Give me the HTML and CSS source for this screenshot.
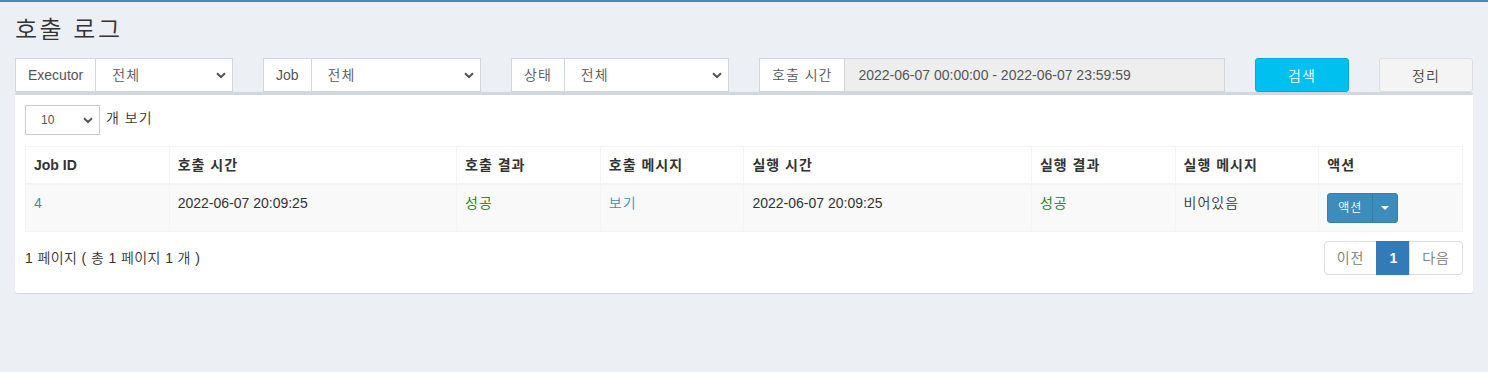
FILE: index.html
```html
<!DOCTYPE html>
<html lang="ko">
<head>
<meta charset="utf-8">
<title>호출 로그</title>
<link rel="stylesheet" href="styles.css">
</head>
<body>
<div class="topbar"></div>
<section class="content-header">
  <h1>호출 로그</h1>
</section>
<section class="content">
  <div class="filters">
    <div class="ig span2">
      <span class="addon">Executor</span>
      <div class="sel"><span class="ko">전체</span><svg class="chev" width="10" height="7" viewBox="0 0 10 7"><path d="M1 1.2 L5 5 L9 1.2" fill="none" stroke="#555" stroke-width="2"/></svg></div>
    </div>
    <div class="ig span2">
      <span class="addon">Job</span>
      <div class="sel"><span class="ko">전체</span><svg class="chev" width="10" height="7" viewBox="0 0 10 7"><path d="M1 1.2 L5 5 L9 1.2" fill="none" stroke="#555" stroke-width="2"/></svg></div>
    </div>
    <div class="ig span2">
      <span class="addon ko">상태</span>
      <div class="sel"><span class="ko">전체</span><svg class="chev" width="10" height="7" viewBox="0 0 10 7"><path d="M1 1.2 L5 5 L9 1.2" fill="none" stroke="#555" stroke-width="2"/></svg></div>
    </div>
    <div class="ig span4">
      <span class="addon ko">호출 시간</span>
      <div class="inp">2022-06-07 00:00:00 - 2022-06-07 23:59:59</div>
    </div>
    <button class="btn btn-info ko">검색</button>
    <button class="btn btn-default ko">정리</button>
  </div>

  <div class="box">
    <div class="box-body">
      <div class="length">
        <div class="sel sm"><span>10</span><svg class="chev" width="10" height="7" viewBox="0 0 10 7"><path d="M1 1.2 L5 5 L9 1.2" fill="none" stroke="#555" stroke-width="2"/></svg></div>
        <span class="len-label ko">개 보기</span>
      </div>
      <table class="tbl">
        <colgroup>
          <col class="w10"><col class="w20"><col class="w10"><col class="w10"><col class="w20"><col class="w10"><col class="w10"><col class="w10">
        </colgroup>
        <thead>
          <tr><th>Job ID</th><th class="ko">호출 시간</th><th class="ko">호출 결과</th><th class="ko">호출 메시지</th><th class="ko">실행 시간</th><th class="ko">실행 결과</th><th class="ko">실행 메시지</th><th class="ko">액션</th></tr>
        </thead>
        <tbody>
          <tr>
            <td><a class="lnk">4</a></td>
            <td>2022-06-07 20:09:25</td>
            <td><span class="ok ko">성공</span></td>
            <td><a class="lnk ko">보기</a></td>
            <td>2022-06-07 20:09:25</td>
            <td><span class="ok ko">성공</span></td>
            <td class="ko">비어있음</td>
            <td>
              <div class="bgroup">
                <span class="bp ko">액션</span><span class="bp caretbtn"><span class="caret"></span></span>
              </div>
            </td>
          </tr>
        </tbody>
      </table>
      <div class="footer-row">
        <div class="info">1 페이지 ( 총 1 페이지 1 개 )</div>
        <ul class="pagination">
          <li class="pg ko">이전</li>
          <li class="pg active">1</li>
          <li class="pg ko">다음</li>
        </ul>
      </div>
    </div>
  </div>
</section>
</body>
</html>
```

FILE: styles.css
```css
* { box-sizing: border-box; }
html, body {
  margin: 0;
  padding: 0;
}
body {
  background: #ecf0f5;
  font-family: "Liberation Sans", "Noto Sans CJK KR", sans-serif;
  font-size: 14px;
  line-height: 20px;
  font-weight: 350;
  color: #333;
}
.ko { letter-spacing: 1px; }
.topbar {
  height: 2px;
  background: #3c8dbc;
}
.content-header {
  padding: 15px 15px 0 15px;
}
.content-header h1 {
  margin: 0;
  font-size: 24px;
  line-height: 26px;
  font-weight: 350;
  letter-spacing: 2.5px;
  color: #333;
}
.content {
  padding: 15px;
}
.filters {
  display: grid;
  grid-template-columns: repeat(12, 1fr);
  column-gap: 30px;
  height: 34px;
}
.span2 { grid-column: span 2; }
.span4 { grid-column: span 4; }
.ig {
  display: flex;
  height: 34px;
}
.addon {
  padding: 6px 12px;
  border: 1px solid #d2d6de;
  border-right: 0;
  background: #fff;
  color: #555;
  white-space: nowrap;
}
.sel {
  flex: 1;
  display: flex;
  align-items: center;
  justify-content: space-between;
  border: 1px solid #d2d6de;
  background: #fff;
  padding: 0 6px 0 16px;
  color: #555;
}
.sel.sm {
  flex: none;
  width: 75px;
  height: 30px;
  font-size: 12px;
  padding: 0 6px 0 15px;
  border-color: #ccc;
}
.chev { display: block; }
.inp {
  flex: 1;
  border: 1px solid #d2d6de;
  background: #eee;
  padding: 6px 13px;
  color: #555;
  white-space: nowrap;
}
.btn {
  height: 34px;
  border-radius: 3px;
  font-family: inherit;
  font-size: 14px;
  font-weight: 350;
  padding: 6px 12px;
  margin: 0;
}
.btn-info {
  background: #00c0ef;
  border: 1px solid #00acd6;
  color: #fff;
}
.btn-default {
  background: #f4f4f4;
  border: 1px solid #ddd;
  color: #444;
}
.box {
  background: #fff;
  border-top: 3px solid #d2d6de;
  border-radius: 3px;
  box-shadow: 0 1px 1px rgba(0,0,0,0.1);
}
.box-body {
  padding: 10px;
}
.length {
  display: flex;
  align-items: center;
  height: 30px;
}
.len-label {
  margin-left: 6px;
  margin-top: -4px;
}
.tbl {
  width: 100%;
  margin-top: 11px;
  border-collapse: collapse;
  border: 1px solid #f4f4f4;
  table-layout: fixed;
}
.w10 { width: 10%; }
.w20 { width: 20%; }
.tbl th, .tbl td {
  border: 1px solid #f4f4f4;
  padding: 8px;
  text-align: left;
  vertical-align: top;
  line-height: 20px;
}
.tbl th {
  font-weight: bold;
  border-bottom: 2px solid #f4f4f4;
}
.tbl tbody tr {
  background: #f9f9f9;
}
.lnk { color: #3c8dbc; }
.ok { color: #008000; }
.bgroup {
  display: inline-flex;
  height: 30px;
}
.bp {
  background: #3c8dbc;
  border: 1px solid #367fa9;
  color: #fff;
  font-size: 12px;
  line-height: 18px;
  padding: 5px 10px;
  border-radius: 3px 0 0 3px;
}
.caretbtn {
  border-left: 1px solid #367fa9;
  margin-left: -1px;
  padding: 5px 8px;
  border-radius: 0 3px 3px 0;
  display: flex;
  align-items: center;
}
.caret {
  display: block;
  width: 0;
  height: 0;
  border-top: 4px solid #fff;
  border-left: 4px solid transparent;
  border-right: 4px solid transparent;
}
.footer-row {
  display: flex;
  align-items: center;
  justify-content: space-between;
  margin: 9px 0 8px 0;
}
.info {
  color: #333;
  letter-spacing: 0.4px;
}
.pagination {
  display: flex;
  list-style: none;
  margin: 0;
  padding: 0;
}
.pg {
  padding: 6px 12px;
  border: 1px solid #ddd;
  margin-left: -1px;
  color: #777;
  background: #fff;
}
.pg:first-child {
  border-radius: 4px 0 0 4px;
  margin-left: 0;
}
.pg:last-child {
  border-radius: 0 4px 4px 0;
}
.pg.active {
  background: #337ab7;
  border-color: #337ab7;
  color: #fff;
  font-weight: bold;
  letter-spacing: 0;
}
```
